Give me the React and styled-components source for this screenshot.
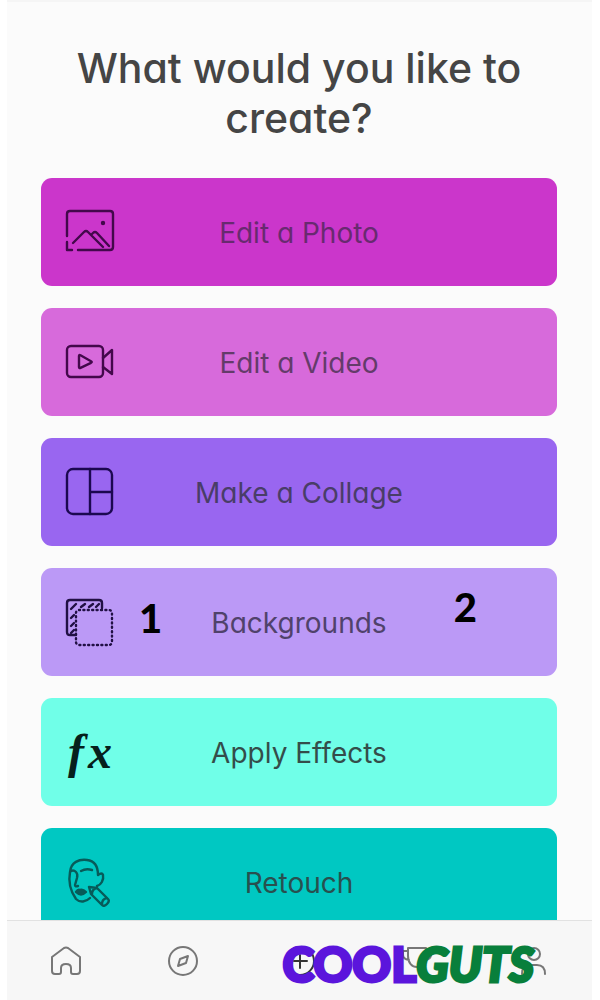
import React from "react";
import styled, { createGlobalStyle } from "styled-components";

const GlobalStyle = createGlobalStyle`
  * { box-sizing: border-box; }
  body { margin: 0; background: #ffffff; }
`;

const Screen = styled.div`
  display: flex;
  flex-direction: column;
  height: 100vh;
  margin: 0 8px 0 7px;
  background: #fbfbfb;
  border-top: 2px solid #f5f5f5;
  font-family: Inter, "Liberation Sans", sans-serif;
  font-feature-settings: "cv11", "ss03";
  color: #454545;
`;

const Content = styled.main`
  flex: 1;
  min-height: 0;
  overflow: hidden;
  padding: 41px 35px 0 34px;
`;

const Title = styled.h1`
  margin: 0 0 35px;
  padding: 0 24px;
  font-size: 41px;
  line-height: 50px;
  font-weight: 450;
  text-align: center;
`;

const Options = styled.div`
  display: flex;
  flex-direction: column;
  gap: 22px;
`;

const Option = styled.button`
  position: relative;
  display: grid;
  grid-template-columns: 50px 1fr 50px;
  align-items: center;
  width: 100%;
  height: 108px;
  padding: 0 24px;
  border: 0;
  border-radius: 11px;
  background: ${(p) => p.$color};
  color: ${(p) => p.$ink};
  font: inherit;
  font-size: 28px;
  line-height: 34px;
  text-align: center;
`;

const Label = styled.span`
  padding-top: 2px;
`;

const OptionIcon = styled.svg`
  width: 50px;
  height: 50px;
  fill: none;
  stroke: ${(p) => p.$ink};
  stroke-width: 2.4;
  stroke-linecap: round;
  stroke-linejoin: round;
`;

const Effects = styled.span`
  display: flex;
  justify-content: center;
  gap: 4px;
  color: #06201c;
  font-family: "Liberation Serif", serif;
  font-size: 48px;
  line-height: 50px;
  font-style: italic;
  font-weight: 700;
`;

const Marker = styled.span`
  position: absolute;
  left: ${(p) => p.$left};
  top: ${(p) => p.$top};
  color: #000000;
  font-family: Lato, sans-serif;
  font-size: 40px;
  line-height: 40px;
  font-weight: 900;
`;

const TabBar = styled.nav`
  position: relative;
  display: grid;
  grid-template-columns: repeat(5, 1fr);
  height: 80px;
  border-top: 1px solid #e2e2e2;
  background: #f7f7f7;
`;

const Tab = styled.button`
  display: flex;
  align-items: center;
  justify-content: center;
  padding: 0;
  border: 0;
  background: none;
  color: ${(p) => (p.$active ? "#333333" : "#777777")};
`;

const TabIcon = styled.svg`
  width: 32px;
  height: 32px;
  fill: none;
  stroke: currentColor;
  stroke-width: 2;
  stroke-linecap: round;
  stroke-linejoin: round;
`;

const Brand = styled.div`
  position: absolute;
  right: 58px;
  top: 17px;
  color: #5b15dc;
  font-family: Lato, sans-serif;
  font-size: 48px;
  line-height: 52px;
  font-weight: 900;
  -webkit-text-stroke: 3px currentColor;
  pointer-events: none;
`;

const BrandAccent = styled.em`
  color: #087f3b;
`;

const PhotoIcon = () => (
  <OptionIcon $ink="#43084b" viewBox="0 0 50 50" aria-hidden="true">
    <path d="M2 29V7q0-3 3-3h40q3 0 3 3v33q0 3-3 3H13M2 35v8h5" />
    <path d="M8 36l11-11q2-2 4 0l15 15M26 28l2-2q2-2 4 0l12 13" />
    <circle cx="38" cy="16" r="1" fill="#43084b" />
  </OptionIcon>
);

const VideoIcon = () => (
  <OptionIcon $ink="#43084b" viewBox="0 0 50 50" aria-hidden="true">
    <rect x="2" y="9" width="36" height="31" rx="4" />
    <path d="M14 19v11q0 1.500 1.500 .8l10.500-5q1.500-.8 0-1.600L15.500 18.300q-1.500-.7-1.500 .7zM38 21l9-8v24l-9-7" />
  </OptionIcon>
);

const CollageIcon = () => (
  <OptionIcon $ink="#1c0850" viewBox="0 0 50 50" aria-hidden="true">
    <rect x="2" y="2" width="45" height="45" rx="6" />
    <path d="M25 2v45M25 25h22" />
  </OptionIcon>
);

const BackgroundsIcon = () => (
  <OptionIcon $ink="#211044" viewBox="0 0 50 50" aria-hidden="true">
    <path d="M11 38H5q-3 0-3-3V6q0-3 3-3h29q3 0 3 3v5" />
    <path d="M6 12l5-5M16 10l4-3M24 10l4-3M31 10l3-3M6 21l3-3M6 29l3-3M6 36l3-3" />
    <rect x="11" y="13" width="36" height="35" rx="3" strokeDasharray="1 3.400" />
  </OptionIcon>
);

const RetouchIcon = () => (
  <OptionIcon $ink="#075b59" viewBox="0 0 50 50" aria-hidden="true">
    <path d="M5 15q3-3 6 0q2 2 1 6l-2 7q0 2 3 1M5 15C6 5 14 2 22 3c8 1 11 7 11 15q4-3 5 0c1 5-2 10-6 11M5 15c-2 11 1 20 6 27c4 4 10 3 14-1M16 14q5-3 11-1" />
    <path d="M11 35q2-3 4-2q3-1 6 2q-5 5-10 0zM12 35h8" />
    <path d="M24 30l8 1 11 11q2 2-1 5t-5 1L26 37zM27 37q0-5 5-6M37 47q0-5 5-6" />
  </OptionIcon>
);

const EffectsIcon = () => (
  <Effects aria-hidden="true">
    <span>f</span>
    <span>x</span>
  </Effects>
);

const options = [
  { label: "Edit a Photo", color: "#cb36cb", ink: "#682a70", icon: <PhotoIcon /> },
  { label: "Edit a Video", color: "#d76adb", ink: "#643b6a", icon: <VideoIcon /> },
  { label: "Make a Collage", color: "#9966f0", ink: "#493d68", icon: <CollageIcon /> },
  { label: "Backgrounds", color: "#bb99f6", ink: "#50426b", icon: <BackgroundsIcon />, markers: true },
  { label: "Apply Effects", color: "#70ffe8", ink: "#344d4a", icon: <EffectsIcon /> },
  { label: "Retouch", color: "#00c8c2", ink: "#28504f", icon: <RetouchIcon /> },
];

export default function App() {
  return (
    <>
      <GlobalStyle />
      <Screen>
        <Content>
          <Title>What would you like to create?</Title>
          <Options>
            {options.map((o) => (
              <Option key={o.label} type="button" $color={o.color} $ink={o.ink}>
                {o.icon}
                <Label>{o.label}</Label>
                {o.markers && (
                  <>
                    <Marker $left="19%" $top="30px">1</Marker>
                    <Marker $left="80%" $top="19px">2</Marker>
                  </>
                )}
              </Option>
            ))}
          </Options>
        </Content>
        <TabBar aria-label="Main">
          <Tab type="button" aria-label="Home">
            <TabIcon viewBox="0 0 32 32">
              <path d="M2 12L14 3q2-1 4 0l12 9v14q0 3-3 3h-4q-2 0-2-2v-4q0-4-5-4t-5 4v4q0 2-2 2H5q-3 0-3-3z" />
            </TabIcon>
          </Tab>
          <Tab type="button" aria-label="Discover">
            <TabIcon viewBox="0 0 32 32">
              <circle cx="16" cy="16" r="14" />
              <path d="M21 11l-2 7-8 3 2-7z" />
            </TabIcon>
          </Tab>
          <Tab type="button" aria-label="Create" $active>
            <TabIcon viewBox="0 0 32 32">
              <circle cx="16" cy="16" r="14" />
              <path d="M16 10v13M10 16h13" />
            </TabIcon>
          </Tab>
          <Tab type="button" aria-label="Challenges">
            <TabIcon viewBox="0 0 32 32">
              <path d="M7 3h18v8c0 7-4 11-9 11S7 18 7 11zM7 6H2v4q0 4 6 5M25 6h5v4q0 4-6 5" />
            </TabIcon>
          </Tab>
          <Tab type="button" aria-label="Profile">
            <TabIcon viewBox="0 0 32 32">
              <circle cx="16" cy="9" r="6" />
              <path d="M4 29q0-9 8-9h7q8 0 8 9" />
            </TabIcon>
          </Tab>
          <Brand>
            COOL<BrandAccent>GUTS</BrandAccent>
          </Brand>
        </TabBar>
      </Screen>
    </>
  );
}
